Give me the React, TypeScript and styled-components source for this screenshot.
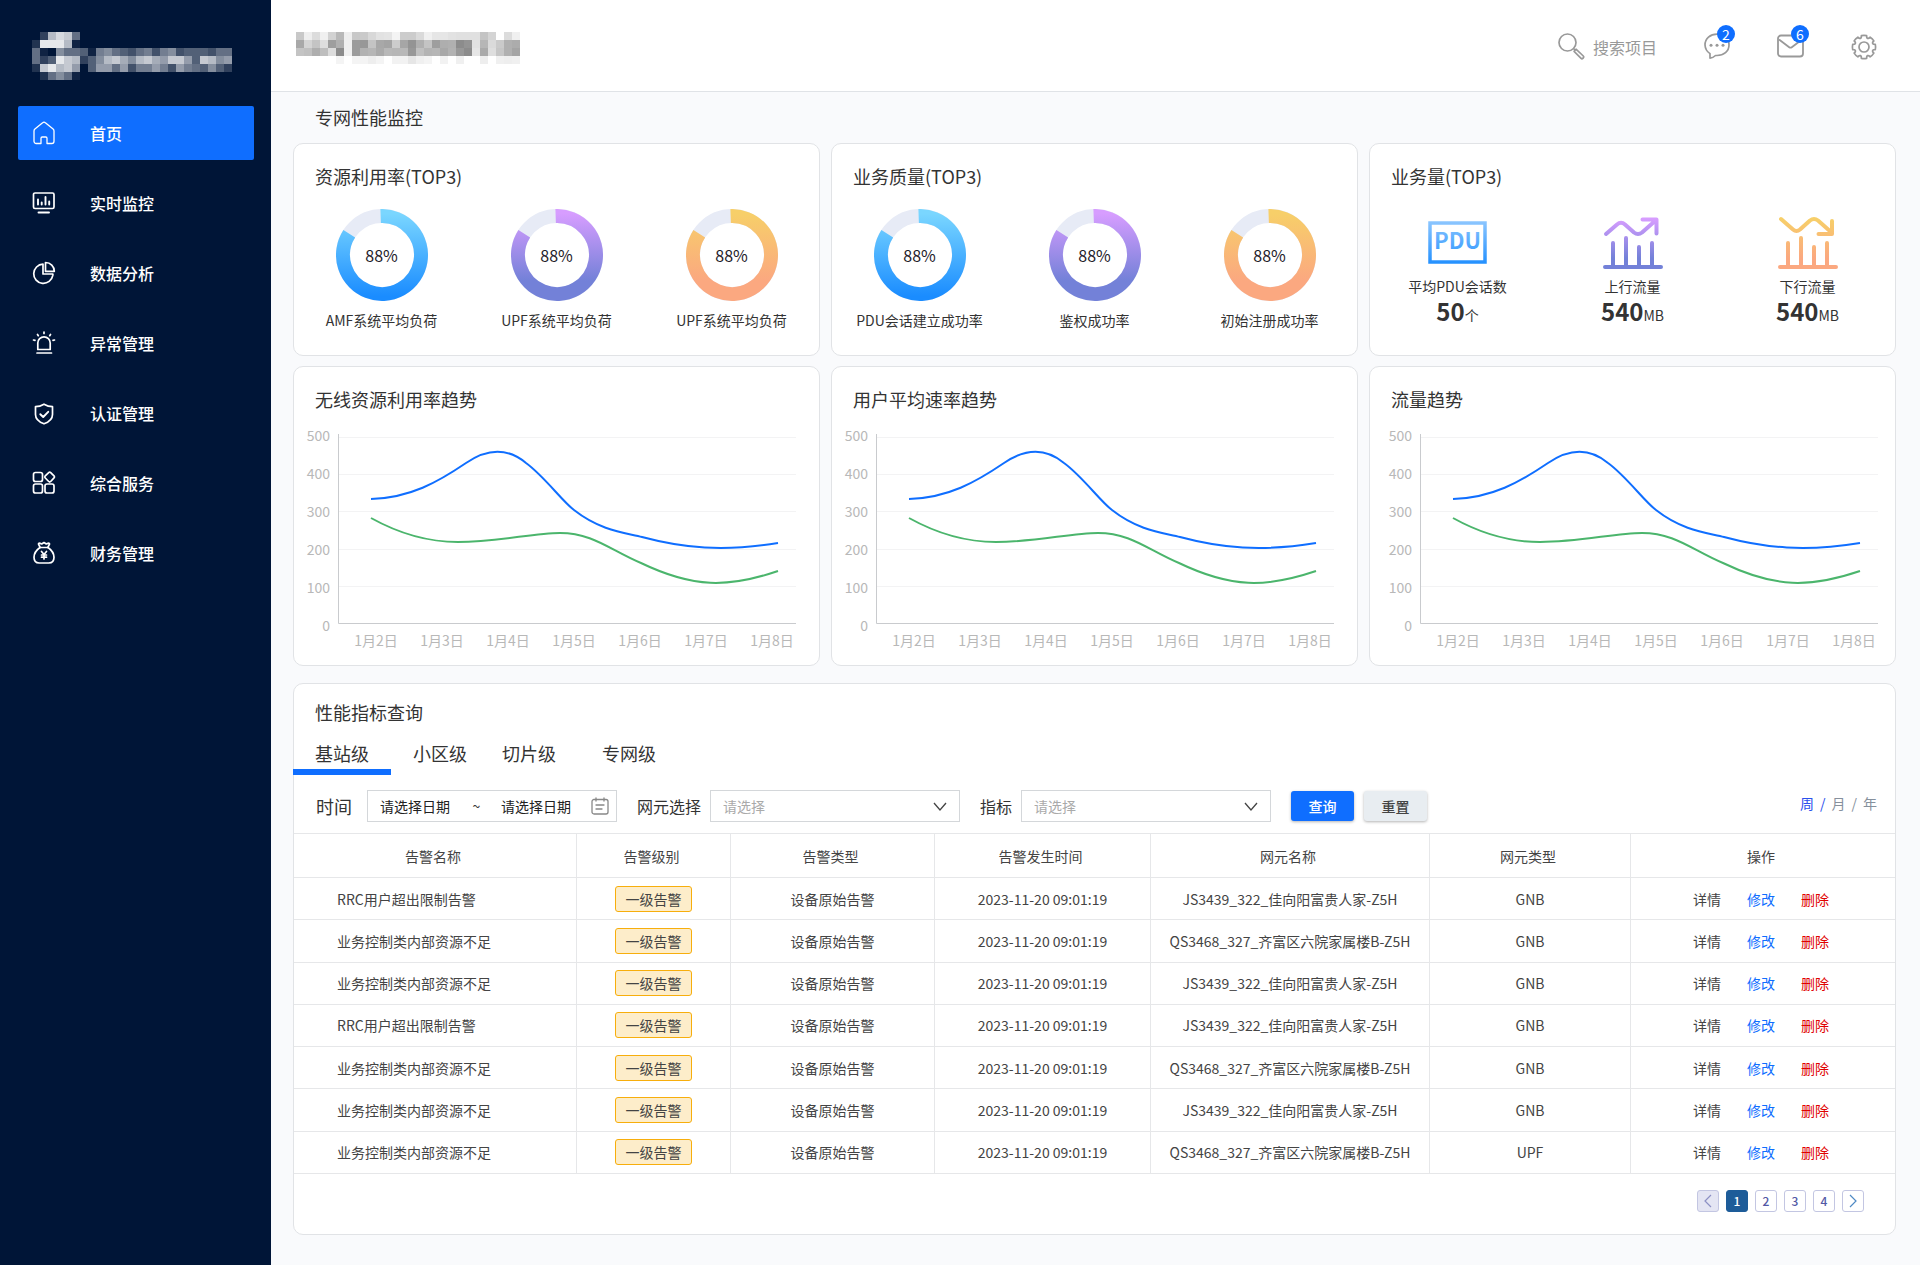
import React from "react";
import styled, { createGlobalStyle } from "styled-components";

const fontStack = '"Noto Sans CJK SC", "Noto Sans", sans-serif';

const GlobalStyle = createGlobalStyle`
  *, *::before, *::after { box-sizing: border-box; }
  body {
    margin: 0;
    background: #f9fafc;
    color: #333;
    font-family: ${fontStack};
    font-size: 14px;
    line-height: 20px;
  }
  button, input, select { font: inherit; color: inherit; }
  h1, h2, p, ul, dl, dd { margin: 0; padding: 0; }
  ul { list-style: none; }
`;

/* ---------- shell ---------- */

const Shell = styled.div`
  display: grid;
  grid-template-columns: 271px minmax(0, 1fr);
  min-height: 100vh;
`;

const Sidebar = styled.aside`
  background: #001537;
  padding: 32px 17px 32px 18px;
`;

const Brand = styled.div`
  padding-left: 14px;
  height: 74px;
`;

const NavList = styled.ul`
  display: grid;
  gap: 16px;
`;

const NavLink = styled.a<{ $active?: boolean }>`
  display: flex;
  align-items: center;
  gap: 34px;
  height: 54px;
  padding-left: 14px;
  border-radius: 2px;
  background: ${(p) => (p.$active ? "#0f6eff" : "transparent")};
  color: #fff;
  font-size: 16px;
  font-weight: 500;
  text-decoration: none;
`;

const Main = styled.div`
  display: flex;
  flex-direction: column;
`;

const TopBar = styled.header`
  display: flex;
  align-items: center;
  justify-content: space-between;
  height: 92px;
  padding: 0 43px 0 25px;
  background: #fff;
  border-bottom: 1px solid #e0e3e7;
`;

const Tools = styled.div`
  display: flex;
  align-items: center;
  gap: 47px;
  padding-top: 2px;
`;

const SearchBox = styled.label`
  display: flex;
  align-items: center;
  gap: 8px;
  color: #999;
`;

const SearchInput = styled.input`
  width: 64px;
  padding: 0;
  border: 0;
  outline: 0;
  background: none;
  font-size: 16px;
  line-height: 24px;
  &::placeholder { color: #999; opacity: 1; }
`;

const IconButton = styled.button`
  position: relative;
  display: grid;
  padding: 0;
  border: 0;
  background: none;
  color: #999;
  cursor: pointer;
`;

const Badge = styled.span`
  position: absolute;
  top: -8px;
  right: -5px;
  width: 18px;
  height: 18px;
  border-radius: 9px;
  background: #0f6eff;
  color: #fff;
  font-size: 14px;
  line-height: 18px;
  text-align: center;
`;

const Content = styled.main`
  padding: 12px 24px 30px 22px;
`;

const PageTitle = styled.h1`
  margin: 0 22px 13px;
  font-size: 18px;
  line-height: 26px;
  font-weight: 400;
`;

const CardGrid = styled.div`
  display: grid;
  grid-template-columns: repeat(3, minmax(0, 1fr));
  gap: 10px 11px;
  margin-bottom: 17px;
`;

const Card = styled.section`
  background: #fff;
  border: 1px solid #e1e3e6;
  border-radius: 10px;
`;

const CardTitle = styled.h2`
  padding: 19px 21px 0;
  font-size: 18px;
  line-height: 26px;
  font-weight: 400;
`;

/* ---------- top cards ---------- */

const MetricRow = styled.div`
  display: grid;
  grid-template-columns: repeat(3, minmax(0, 1fr));
  padding: 20px 0 25px;
`;

const Metric = styled.div`
  display: flex;
  flex-direction: column;
  align-items: center;
`;

const DonutBox = styled.div`
  display: grid;
  place-items: center;
  margin-bottom: 9px;
  > * { grid-area: 1 / 1; }
`;

const DonutValue = styled.span`
  color: #1d2129;
  font-size: 16px;
  line-height: 22px;
`;

const FigureBox = styled.div`
  display: grid;
  place-items: center;
  height: 67px;
`;

const Total = styled.p`
  line-height: 30px;
`;

const TotalValue = styled.strong`
  font-size: 24px;
  font-weight: 700;
`;

/* ---------- charts ---------- */

const Chart = styled.div<{ $wide?: boolean }>`
  display: grid;
  grid-template-columns: ${(p) => (p.$wide ? "42px" : "36px")} minmax(0, 1fr);
  column-gap: 8px;
  padding: 13px ${(p) => (p.$wide ? "17px" : "23px")} 15px 0;
  color: #b8b8b8;
`;

const YAxis = styled.div`
  display: flex;
  flex-direction: column;
  justify-content: space-between;
  height: 210px;
  text-align: right;
`;

const Plot = styled.div`
  padding-top: 9px;
`;

const PlotSvg = styled.svg`
  display: block;
  width: 100%;
  height: 190px;
`;

const XAxis = styled.div`
  display: grid;
  grid-template-columns: repeat(7, minmax(0, 1fr));
  margin: 6px -9px 0 5px;
  text-align: center;
  white-space: nowrap;
`;

/* ---------- query card ---------- */

const QueryCard = styled(Card)`
  padding-top: 15px;
`;

const QueryTitle = styled(CardTitle)`
  padding-top: 0;
`;

const Tabs = styled.div`
  display: grid;
  grid-template-columns: 98px 98px 80px 120px;
  margin-left: -1px;
`;

const Tab = styled.button<{ $active?: boolean }>`
  padding: 15px 0 3px;
  border: 0;
  border-bottom: 6px solid ${(p) => (p.$active ? "#0f6eff" : "transparent")};
  background: none;
  font-size: 18px;
  line-height: 26px;
  cursor: pointer;
`;

const Filters = styled.form`
  display: flex;
  align-items: center;
  gap: 20px;
  padding: 15px 18px 11px 22px;
`;

const Field = styled.div<{ $loose?: boolean }>`
  display: flex;
  align-items: center;
  gap: ${(p) => (p.$loose ? "15px" : "9px")};
`;

const FieldLabel = styled.label<{ $large?: boolean }>`
  font-size: ${(p) => (p.$large ? "18px" : "16px")};
  line-height: 24px;
  white-space: nowrap;
`;

const DateRange = styled.div`
  display: flex;
  align-items: center;
  width: 250px;
  height: 32px;
  padding: 0 7px 0 12px;
  border: 1px solid #d4d7da;
  color: #888;
`;

const DateInput = styled.input`
  width: 72px;
  padding: 0;
  border: 0;
  outline: 0;
  background: none;
  color: #222;
  &::placeholder { color: #222; opacity: 1; }
`;

const Tilde = styled.span`
  width: 49px;
  color: #333;
  text-align: center;
`;

const DateIcon = styled.span`
  display: grid;
  flex: 1;
  justify-items: end;
`;

const SelectBox = styled.div`
  display: grid;
  align-items: center;
  width: 250px;
  color: #444;
  > * { grid-area: 1 / 1; }
  > svg { justify-self: end; margin-right: 13px; pointer-events: none; }
`;

const Select = styled.select`
  width: 100%;
  height: 32px;
  padding: 0 12px;
  border: 1px solid #d4d7da;
  border-radius: 0;
  appearance: none;
  background: #fff;
  color: #aaa;
`;

const Actions = styled.div`
  display: flex;
  gap: 10px;
`;

const ActionButton = styled.button<{ $primary?: boolean }>`
  width: 63px;
  height: 30px;
  padding: 0;
  border: 0;
  border-radius: 3px;
  background: ${(p) => (p.$primary ? "#0f6eff" : "#e8edf1")};
  box-shadow: 0 1px 3px rgba(0, 0, 0, 0.3);
  color: ${(p) => (p.$primary ? "#fff" : "#444")};
  font-weight: 500;
  cursor: pointer;
`;

const Period = styled.div`
  display: flex;
  gap: 6px;
  margin-left: auto;
  padding-bottom: 6px;
`;

const PeriodButton = styled.button<{ $active?: boolean }>`
  padding: 0;
  border: 0;
  background: none;
  color: ${(p) => (p.$active ? "#2b50ed" : "#86909c")};
  cursor: pointer;
`;

const Slash = styled.span<{ $active?: boolean }>`
  color: ${(p) => (p.$active ? "#2b50ed" : "#86909c")};
`;

const Table = styled.table`
  width: 100%;
  height: 341px;
  table-layout: fixed;
  border-collapse: separate;
  border-spacing: 0;
  color: #444;
  text-align: center;
`;

const HeadCell = styled.th`
  height: 45px;
  padding: 0 4px 0 0;
  border-top: 1px solid #e6e7e9;
  border-bottom: 1px solid #e6e7e9;
  font-weight: 400;
  & + & { border-left: 1px solid #e6e7e9; }
`;

const Cell = styled.td<{ $start?: boolean }>`
  height: 42px;
  padding: 0 0 0 ${(p) => (p.$start ? "43px" : "0")};
  border-bottom: 1px solid #e6e7e9;
  text-align: ${(p) => (p.$start ? "left" : "center")};
  white-space: nowrap;
  & + & { border-left: 1px solid #e6e7e9; }
`;

const LevelTag = styled.span`
  display: inline-block;
  width: 77px;
  height: 26px;
  border: 1px solid #f7ae0c;
  border-radius: 3px;
  background: #fdedca;
  line-height: 24px;
  vertical-align: middle;
`;

const RowActions = styled.div`
  display: flex;
  justify-content: center;
  gap: 26px;
  padding-right: 4px;
`;

const RowAction = styled.button<{ $color: string }>`
  padding: 0;
  border: 0;
  background: none;
  color: ${(p) => p.$color};
  cursor: pointer;
`;

const Pager = styled.nav`
  display: flex;
  justify-content: flex-end;
  gap: 7px;
  padding: 16px 31px 22px;
`;

const PageButton = styled.button<{ $kind?: "current" | "disabled" }>`
  display: grid;
  place-items: center;
  width: 22px;
  height: 22px;
  padding: 0;
  border: 1px solid ${(p) => (p.$kind === "current" ? "#1d5c99" : "#c3c6e2")};
  border-radius: 3px;
  background: ${(p) => (p.$kind === "current" ? "#1d5c99" : p.$kind === "disabled" ? "#e4e5f3" : "#fff")};
  color: ${(p) => (p.$kind === "current" ? "#fff" : "#5258a5")};
  font-size: 12px;
  line-height: 20px;
  font-weight: 500;
`;

/* ---------- pixelated marks ---------- */

const brandCells = [
  ".3bdc6",
  "2eeeb1",
  "6108665178654674784555466",
  "635ecb358bca8bca9cc95cb89",
  "2cebc90599694779749765853",
  ".26861",
];

const BrandMark = () => (
  <svg width="200" height="48" role="img" aria-label="logo" shapeRendering="crispEdges">
    {brandCells.flatMap((row, y) =>
      [...row].map((c, x) =>
        c === "." || c === "0" ? null : (
          <rect key={`${x}-${y}`} x={x * 8} y={y * 8} width="8" height="8" fill="#fff" fillOpacity={parseInt(c, 16) / 15.5} />
        )
      )
    )}
  </svg>
);

const titleCells = [
  "c8eedcf0d2b8eec8cad8e2e4f4ccccdaf0e6e6e2e0e0e0c4d4ffdcf0",
  "a8d4c4de9eb0f09c98c4a8a4cca694b0c49eaeb08c94e2b6dacab0ac",
  "c4c0aebedc8cf09cb2b6aab8b6b898c0b4b6a8b2988ce6aadec6b0a4",
  "fffffffffff4fff4f4eef4fff2f2e6f0f4fff2fff0ffffeefff0eef0",
];

const TitleMark = () => (
  <svg width="224" height="32" role="img" aria-label="title" shapeRendering="crispEdges">
    {titleCells.flatMap((row, y) =>
      (row.match(/../g) ?? []).map((v, x) => (
        <rect key={`${x}-${y}`} x={x * 8} y={y * 8} width="8" height="8" fill={`#${v}${v}${v}`} />
      ))
    )}
  </svg>
);

const TitleSlot = styled.div`
  display: grid;
  padding-top: 4px;
`;

/* ---------- icons ---------- */

const NavIcon = ({ children }: { children: React.ReactNode }) => (
  <svg width="24" height="24" viewBox="0 0 24 24" fill="none" stroke="#fff" strokeWidth="1.700" strokeLinecap="round" strokeLinejoin="round" aria-hidden="true">
    {children}
  </svg>
);

const navItems = [
  {
    label: "首页",
    icon: <path d="M9 22.5H4.2c-1.200 0-2.200-1-2.200-2.200V10c0-.8.3-1.400.9-1.900l7.700-6.400c.8-.7 2-.7 2.800 0l7.700 6.400c.6.500.9 1.100.9 1.900v10.300c0 1.200-1 2.200-2.200 2.200H15v-5.300c0-.7-.5-1.200-1.200-1.200h-3.600c-.7 0-1.200.5-1.200 1.200z" strokeWidth="1.300" />,
  },
  {
    label: "实时监控",
    icon: (
      <>
        <rect x="1.500" y="2" width="20.500" height="15.500" rx="1.500" />
        <path d="M6 8.500v5M9.700 11.500v2M13.500 6v7.500M17.200 10.500v3M6.500 21.500h10.500" strokeWidth="1.900" />
      </>
    ),
  },
  {
    label: "数据分析",
    icon: (
      <>
        <path d="M11 3.200a9.600 9.600 0 1 0 9.800 11.200c.1-.7.1-1 .1-1.400H11z" />
        <path d="M13.500 1.500v8.800h8.800c0-5-3.800-8.800-8.800-8.800z" />
      </>
    ),
  },
  {
    label: "异常管理",
    icon: (
      <>
        <path d="M5.800 18.500V12a6.200 6.200 0 0 1 12.400 0v6.500zM5 22h14.500" />
        <path d="M12 1v1.500M5.500 3.500l.8 1.200M18.500 3.500l-.8 1.200M1.500 9l1.500.4M22.500 9l-1.500.4" />
      </>
    ),
  },
  {
    label: "认证管理",
    icon: (
      <>
        <path d="M12 3.200c2.800 1.600 5.600 2.400 8.500 2.500v7.800c0 4-3.700 7.600-8.500 9.300-4.800-1.700-8.500-5.300-8.500-9.300V5.700c2.900-.1 5.700-.9 8.500-2.500z" />
        <path d="M8.300 13.200l2.900 2.800 5-5.200" strokeWidth="1.900" />
      </>
    ),
  },
  {
    label: "综合服务",
    icon: (
      <>
        <rect x="1.500" y="1.500" width="9" height="9" rx="2" />
        <rect x="1.500" y="13" width="9" height="9" rx="2" />
        <rect x="13" y="13" width="9" height="9" rx="2" />
        <path d="M16.700 1.600c.6-.6 1.400-.6 2 0l3.300 3.300c.6.600.6 1.400 0 2l-3.300 3.600c-.6.600-1.400.6-2 0L13.300 7c-.6-.6-.6-1.500 0-2.100z" />
      </>
    ),
  },
  {
    label: "财务管理",
    icon: (
      <>
        <path d="M8 6.500h8c4 2.800 6 6.300 6 9.800 0 3.500-2 5.700-5.200 5.700H7.200C4 22 2 19.800 2 16.300c0-3.500 2-7 6-9.800z" />
        <path d="M8.200 6.500L6.500 3.200c-.2-.9.8-1.400 1.800-.8l1.400.6L12 1.500l2.300 1.500 1.400-.6c1-.6 2-.1 1.800.8l-1.700 3.300" />
        <path d="M9.500 10.500l2.500 3 2.500-3M12 13.500V18M9.500 14h5M9.500 16.200h5" />
      </>
    ),
  },
];

const SearchIcon = () => (
  <svg width="27" height="27" viewBox="0 0 27 27" fill="none" stroke="#999" strokeWidth="1.700" aria-hidden="true">
    <circle cx="9.500" cy="9.500" r="8.500" />
    <path d="M15.500 15.500l2 2M18 16.200l7.300 6.800c1.200 1.200-1 3.500-2.200 2.400l-7-7.100z" strokeLinejoin="round" />
  </svg>
);

const ChatIcon = () => (
  <svg width="26" height="27" viewBox="0 0 26 27" fill="none" stroke="#999" strokeWidth="1.700" aria-hidden="true">
    <path d="M6 25.200v-4.600A11 11 0 0 1 1 12C1 5.500 6.300 1.200 13 1.200S25 5.500 25 12s-5.300 10.500-12 10.500h-1.500c-1.500 1.400-3.300 2.400-5.500 2.700z" strokeLinejoin="round" />
    <g fill="#999" stroke="none">
      <circle cx="7" cy="12.300" r="1.500" />
      <circle cx="13" cy="12.300" r="1.500" />
      <circle cx="19" cy="12.300" r="1.500" />
    </g>
  </svg>
);

const MailIcon = () => (
  <svg width="27" height="27" viewBox="0 -1 27 27" fill="none" stroke="#999" strokeWidth="1.800" strokeLinejoin="round" aria-hidden="true">
    <rect x="1" y="1.500" width="25" height="21" rx="3" />
    <path d="M2 5.500l10.200 7.700c.8.600 1.800.6 2.600 0L25 5.500" />
  </svg>
);

const gearPath = (() => {
  const at = (deg: number, r: number) => {
    const a = (deg * Math.PI) / 180;
    return `${(13 + r * Math.sin(a)).toFixed(2)} ${(13 - r * Math.cos(a)).toFixed(2)}`;
  };
  const parts: string[] = [];
  for (let i = 0; i < 8; i += 1) {
    const c = i * 45;
    parts.push(`${i ? "L" : "M"}${at(c - 13, 11.6)} A11.6 11.6 0 0 1 ${at(c + 13, 11.6)} L${at(c + 16, 10)} Q${at(c + 22.5, 8.8)} ${at(c + 29, 10)}`);
  }
  return `${parts.join(" ")}Z`;
})();

const GearIcon = () => (
  <svg width="26" height="26" viewBox="0 0 26 26" fill="none" stroke="#999" strokeWidth="1.700" strokeLinejoin="round" aria-hidden="true">
    <path d={gearPath} />
    <circle cx="13" cy="13" r="5" />
  </svg>
);

const CalendarIcon = () => (
  <svg width="18" height="18" viewBox="0 0 18 18" fill="none" stroke="#888" strokeWidth="1.300" strokeLinecap="round" aria-hidden="true">
    <rect x="1" y="2.500" width="16" height="14.500" rx="2" />
    <path d="M5 1v3M13 1v3M5 8h8M5 12h6" />
  </svg>
);

const Chevron = () => (
  <svg width="14" height="9" viewBox="0 0 14 9" fill="none" stroke="#444" strokeWidth="1.300" aria-hidden="true">
    <path d="M1 1l6 7 6-7" />
  </svg>
);

const PageArrow = ({ next }: { next?: boolean }) => (
  <svg width="8" height="14" viewBox="0 0 8 14" fill="none" stroke={next ? "#4f8ac4" : "#8c90c4"} strokeWidth="1.200" aria-hidden="true">
    <path d={next ? "M1 1l6 6-6 6" : "M7 1L1 7l6 6"} />
  </svg>
);

/* ---------- gradients shared by donuts and figures ---------- */

type Tone = "blue" | "violet" | "amber";
const tones: Record<Tone, [string, string]> = {
  blue: ["#7ad6ff", "#1a8cff"],
  violet: ["#d79dff", "#7381d8"],
  amber: ["#f7cf69", "#fba880"],
};

const Ramp = ({ id, tone, height }: { id: string; tone: Tone; height: number }) => (
  <defs>
    <linearGradient id={id} gradientUnits="userSpaceOnUse" x1="0" y1="0" x2="0" y2={height}>
      <stop offset="0.05" stopColor={tones[tone][0]} />
      <stop offset={tone === "blue" ? "0.95" : "0.78"} stopColor={tones[tone][1]} />
    </linearGradient>
  </defs>
);

const ringPoint = (deg: number) => {
  const a = (deg * Math.PI) / 180;
  return `${(46 + 39 * Math.sin(a)).toFixed(2)} ${(46 - 39 * Math.cos(a)).toFixed(2)}`;
};

const Donut = ({ tone, id }: { tone: Tone; id: string }) => (
  <svg width="92" height="92" viewBox="0 0 92 92" fill="none" strokeWidth="14" aria-hidden="true">
    <Ramp id={id} tone={tone} height={92} />
    <circle cx="46" cy="46" r="39" stroke="#e7ebf6" />
    <path d={`M${ringPoint(-2)} A39 39 0 1 1 ${ringPoint(303)}`} stroke={`url(#${id})`} />
  </svg>
);

const PduFigure = () => (
  <svg width="59" height="43" viewBox="0 0 59 43" role="img" aria-label="PDU">
    <defs>
      <linearGradient id="pdu" gradientUnits="userSpaceOnUse" x1="0" y1="0" x2="0" y2="43">
        <stop offset="0" stopColor="#8cc6ff" />
        <stop offset="1" stopColor="#2290ff" />
      </linearGradient>
    </defs>
    <rect x="2" y="2" width="55" height="39" fill="none" stroke="url(#pdu)" strokeWidth="3.500" />
    <text x="29.500" y="28" textAnchor="middle" fontSize="22" fontWeight="700" fill="url(#pdu)">PDU</text>
  </svg>
);

const TrafficFigure = ({ down }: { down?: boolean }) => {
  const id = down ? "traffic-down" : "traffic-up";
  return (
    <svg width="60" height="54" viewBox="0 0 60 54" fill="none" stroke={`url(#${id})`} strokeWidth="4" strokeLinecap="round" strokeLinejoin="round" aria-hidden="true">
      <Ramp id={id} tone={down ? "amber" : "violet"} height={54} />
      <path d="M2 51H58M10 27V51M23 22V51M36 31V51M49 27V51" />
      {down ? (
        <path d="M3 3L15 13.500Q18.500 16.500 22 13.500L32 4.500Q36 1.500 40 4.500L53 16M54 5V18H40.500" />
      ) : (
        <path d="M3 18L14 8.500Q18 5 22 8.500L31 16.500Q35 19.500 39 16.500L52 5M39.500 3.500H53.500V17.500" />
      )}
    </svg>
  );
};

/* ---------- chart data ---------- */

const blueLine =
  "M33 65C72 64 100 48 128 29C150 14 170 14 188 29C206 42 224 67 236 76C264 98 290 99 304 103C345 114 385 118 440 109";
const greenLine =
  "M33 84C60 99 90 108 120 108C160 108 195 99 222 99C255 99 272 116 303 129C355 154 390 154 440 137";

const days = ["1月2日", "1月3日", "1月4日", "1月5日", "1月6日", "1月7日", "1月8日"];
const ticks = [500, 400, 300, 200, 100, 0];

const TrendCard = ({ title, wide }: { title: string; wide?: boolean }) => (
  <Card>
    <CardTitle>{title}</CardTitle>
    <Chart $wide={wide}>
      <YAxis>
        {ticks.map((t) => (
          <span key={t}>{t}</span>
        ))}
      </YAxis>
      <Plot>
        <PlotSvg viewBox="0 0 458 190" preserveAspectRatio="none" fill="none" role="img" aria-label={title}>
          <g stroke="#f3f3f4" shapeRendering="crispEdges">
            {[3, 40, 77, 115, 152].map((y) => (
              <path key={y} d={`M0 ${y + 0.5}H458`} />
            ))}
          </g>
          <path d="M0.5 0V189.5H458" stroke="#c9cbce" vectorEffect="non-scaling-stroke" />
          <path d={blueLine} stroke="#0f6eff" strokeWidth="2" vectorEffect="non-scaling-stroke" />
          <path d={greenLine} stroke="#4bb56c" strokeWidth="2" vectorEffect="non-scaling-stroke" />
        </PlotSvg>
        <XAxis>
          {days.map((d) => (
            <span key={d}>{d}</span>
          ))}
        </XAxis>
      </Plot>
    </Chart>
  </Card>
);

const toneOrder: Tone[] = ["blue", "violet", "amber"];

const RateCard = ({ title, prefix, labels }: { title: string; prefix: string; labels: string[] }) => (
  <Card>
    <CardTitle>{title}</CardTitle>
    <MetricRow>
      {labels.map((label, i) => (
        <Metric key={i}>
          <DonutBox>
            <Donut tone={toneOrder[i]} id={`${prefix}-${i}`} />
            <DonutValue>88%</DonutValue>
          </DonutBox>
          <span>{label}</span>
        </Metric>
      ))}
    </MetricRow>
  </Card>
);

const totals = [
  { label: "平均PDU会话数", value: "50", unit: "个", figure: <PduFigure /> },
  { label: "上行流量", value: "540", unit: "MB", figure: <TrafficFigure /> },
  { label: "下行流量", value: "540", unit: "MB", figure: <TrafficFigure down /> },
];

/* ---------- table data ---------- */

const columns = [
  { name: "告警名称", width: 282 },
  { name: "告警级别", width: 154 },
  { name: "告警类型", width: 204 },
  { name: "告警发生时间", width: 216 },
  { name: "网元名称", width: 279 },
  { name: "网元类型", width: 201 },
  { name: "操作", width: 265 },
];

const limitAlarm = "RRC用户超出限制告警";
const resourceAlarm = "业务控制类内部资源不足";
const siteA = "JS3439_322_佳向阳富贵人家-Z5H";
const siteB = "QS3468_327_齐富区六院家属楼B-Z5H";

const rows = [
  [limitAlarm, siteA, "GNB"],
  [resourceAlarm, siteB, "GNB"],
  [resourceAlarm, siteA, "GNB"],
  [limitAlarm, siteA, "GNB"],
  [resourceAlarm, siteB, "GNB"],
  [resourceAlarm, siteA, "GNB"],
  [resourceAlarm, siteB, "UPF"],
];

const SelectField = ({ id, label }: { id: string; label: string }) => (
  <Field>
    <FieldLabel htmlFor={id}>{label}</FieldLabel>
    <SelectBox>
      <Select id={id} defaultValue="">
        <option value="">请选择</option>
      </Select>
      <Chevron />
    </SelectBox>
  </Field>
);

export default function App() {
  return (
    <>
      <GlobalStyle />
      <Shell>
        <Sidebar>
          <Brand>
            <BrandMark />
          </Brand>
          <nav>
            <NavList>
              {navItems.map((item, i) => (
                <li key={item.label}>
                  <NavLink href="#" $active={i === 0}>
                    <NavIcon>{item.icon}</NavIcon>
                    {item.label}
                  </NavLink>
                </li>
              ))}
            </NavList>
          </nav>
        </Sidebar>
        <Main>
          <TopBar>
            <TitleSlot>
              <TitleMark />
            </TitleSlot>
            <Tools>
              <SearchBox>
                <SearchIcon />
                <SearchInput type="text" placeholder="搜索项目" aria-label="搜索项目" />
              </SearchBox>
              <IconButton type="button" aria-label="消息">
                <ChatIcon />
                <Badge>2</Badge>
              </IconButton>
              <IconButton type="button" aria-label="邮件">
                <MailIcon />
                <Badge>6</Badge>
              </IconButton>
              <IconButton type="button" aria-label="设置">
                <GearIcon />
              </IconButton>
            </Tools>
          </TopBar>
          <Content>
            <PageTitle>专网性能监控</PageTitle>
            <CardGrid>
              <RateCard title="资源利用率(TOP3)" prefix="resource" labels={["AMF系统平均负荷", "UPF系统平均负荷", "UPF系统平均负荷"]} />
              <RateCard title="业务质量(TOP3)" prefix="quality" labels={["PDU会话建立成功率", "鉴权成功率", "初始注册成功率"]} />
              <Card>
                <CardTitle>业务量(TOP3)</CardTitle>
                <MetricRow>
                  {totals.map((t) => (
                    <Metric key={t.label}>
                      <FigureBox>{t.figure}</FigureBox>
                      <span>{t.label}</span>
                      <Total>
                        <TotalValue>{t.value}</TotalValue>
                        {t.unit}
                      </Total>
                    </Metric>
                  ))}
                </MetricRow>
              </Card>
              <TrendCard title="无线资源利用率趋势" />
              <TrendCard title="用户平均速率趋势" />
              <TrendCard title="流量趋势" wide />
            </CardGrid>
            <QueryCard>
              <QueryTitle>性能指标查询</QueryTitle>
              <Tabs role="tablist">
                {["基站级", "小区级", "切片级", "专网级"].map((t, i) => (
                  <Tab key={t} type="button" role="tab" aria-selected={i === 0} $active={i === 0}>
                    {t}
                  </Tab>
                ))}
              </Tabs>
              <Filters>
                <Field $loose>
                  <FieldLabel htmlFor="date-from" $large>时间</FieldLabel>
                  <DateRange>
                    <DateInput id="date-from" type="text" placeholder="请选择日期" />
                    <Tilde>~</Tilde>
                    <DateInput type="text" placeholder="请选择日期" aria-label="结束日期" />
                    <DateIcon>
                      <CalendarIcon />
                    </DateIcon>
                  </DateRange>
                </Field>
                <SelectField id="element" label="网元选择" />
                <SelectField id="indicator" label="指标" />
                <Actions>
                  <ActionButton type="button" $primary>查询</ActionButton>
                  <ActionButton type="button">重置</ActionButton>
                </Actions>
                <Period>
                  <PeriodButton type="button" $active>周</PeriodButton>
                  <Slash $active>/</Slash>
                  <PeriodButton type="button">月</PeriodButton>
                  <Slash>/</Slash>
                  <PeriodButton type="button">年</PeriodButton>
                </Period>
              </Filters>
              <Table>
                <colgroup>
                  {columns.map((c) => (
                    <col key={c.name} width={c.width} />
                  ))}
                </colgroup>
                <thead>
                  <tr>
                    {columns.map((c) => (
                      <HeadCell key={c.name} scope="col">{c.name}</HeadCell>
                    ))}
                  </tr>
                </thead>
                <tbody>
                  {rows.map(([alarm, site, kind], i) => (
                    <tr key={i}>
                      <Cell $start>{alarm}</Cell>
                      <Cell>
                        <LevelTag>一级告警</LevelTag>
                      </Cell>
                      <Cell>设备原始告警</Cell>
                      <Cell>2023-11-20 09:01:19</Cell>
                      <Cell>{site}</Cell>
                      <Cell>{kind}</Cell>
                      <Cell>
                        <RowActions>
                          <RowAction type="button" $color="#444">详情</RowAction>
                          <RowAction type="button" $color="#0f6eff">修改</RowAction>
                          <RowAction type="button" $color="#e00000">删除</RowAction>
                        </RowActions>
                      </Cell>
                    </tr>
                  ))}
                </tbody>
              </Table>
              <Pager aria-label="分页">
                <PageButton type="button" $kind="disabled" aria-label="上一页">
                  <PageArrow />
                </PageButton>
                <PageButton type="button" $kind="current">1</PageButton>
                <PageButton type="button">2</PageButton>
                <PageButton type="button">3</PageButton>
                <PageButton type="button">4</PageButton>
                <PageButton type="button" aria-label="下一页">
                  <PageArrow next />
                </PageButton>
              </Pager>
            </QueryCard>
          </Content>
        </Main>
      </Shell>
    </>
  );
}
